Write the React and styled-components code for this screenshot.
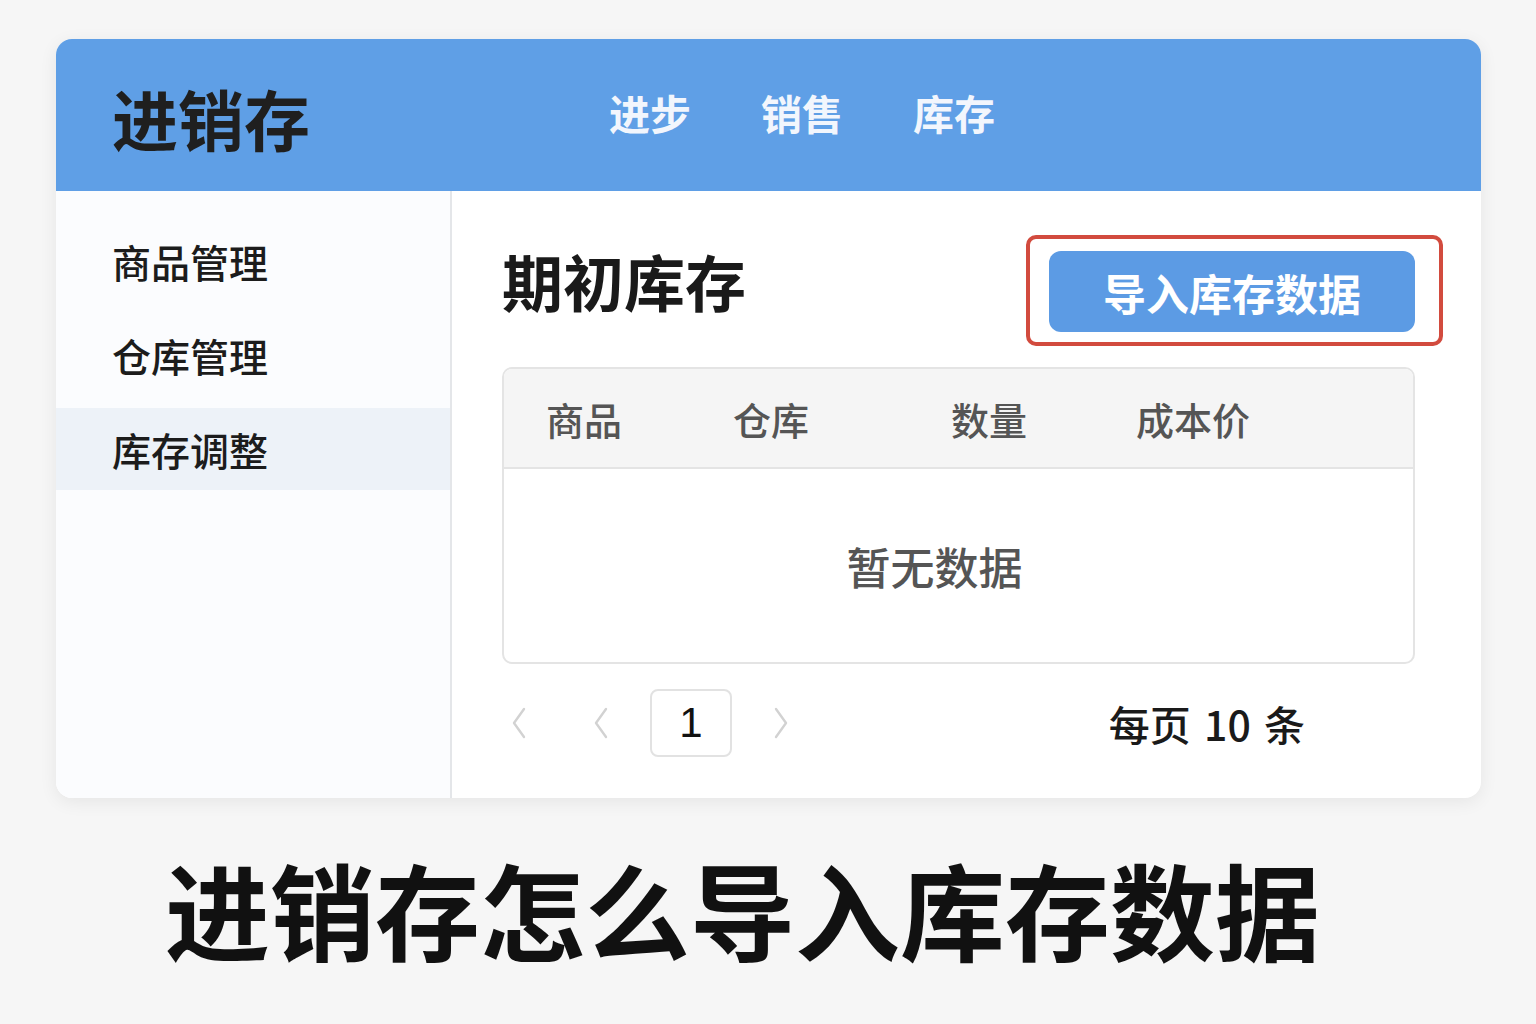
import React from 'react'
import styled, { createGlobalStyle } from 'styled-components'

const GlobalStyle = createGlobalStyle`
    body {
        margin: 0;
        background: #f6f6f6;
        font-family: "Noto Sans CJK SC", "Noto Sans", sans-serif;
    }
`

const Chevron = ({ dir }) => (
    <svg width="22" height="34" viewBox="0 0 22 34" fill="none">
        <path
            d={dir === 'left' ? 'M16 3 L6 17 L16 31' : 'M6 3 L16 17 L6 31'}
            stroke="#d2d2d2"
            strokeWidth="2.4"
            strokeLinecap="round"
            strokeLinejoin="round"
        />
    </svg>
)

const App = () => {
    return (
        <Page>
            <GlobalStyle />
            <Card>
                <Header>
                    <Logo>进销存</Logo>
                    <Nav>
                        <NavItem>进步</NavItem>
                        <NavItem>销售</NavItem>
                        <NavItem>库存</NavItem>
                    </Nav>
                </Header>
                <Body>
                    <Sidebar>
                        <SideItem>商品管理</SideItem>
                        <SideItem>仓库管理</SideItem>
                        <SideItem active>库存调整</SideItem>
                    </Sidebar>
                    <Main>
                        <TitleRow>
                            <Title>期初库存</Title>
                            <Highlight>
                                <ImportButton>导入库存数据</ImportButton>
                            </Highlight>
                        </TitleRow>
                        <Table>
                            <TableHead>
                                <span>商品</span>
                                <span>仓库</span>
                                <span>数量</span>
                                <span>成本价</span>
                            </TableHead>
                            <Empty>暂无数据</Empty>
                        </Table>
                        <Pager>
                            <PagerLeft>
                                <Chevron dir="left" />
                                <Chevron dir="left" />
                                <PageBox>1</PageBox>
                                <Chevron dir="right" />
                            </PagerLeft>
                            <PageSize>每页 10 条</PageSize>
                        </Pager>
                    </Main>
                </Body>
            </Card>
            <Caption>进销存怎么导入库存数据</Caption>
        </Page>
    )
}

const Page = styled.div`
    padding: 39px 55px 0 56px;
    min-height: 985px;
`

const Card = styled.div`
    height: 759px;
    background: #fff;
    border-radius: 16px;
    overflow: hidden;
    box-shadow: 0 4px 18px rgba(0, 0, 0, 0.07);
    display: flex;
    flex-direction: column;
`

const Header = styled.div`
    height: 152px;
    flex-shrink: 0;
    background: #5f9fe6;
    display: flex;
    align-items: center;
    padding-left: 56px;
`

const Logo = styled.div`
    font-size: 66px;
    font-weight: 700;
    color: #1f1f1f;
    line-height: 1;
    margin-top: 4px;
    width: 200px;
    flex-shrink: 0;
    white-space: nowrap;
`

const Nav = styled.div`
    display: flex;
    gap: 70px;
    margin-left: 297px;
    margin-top: -6px;
`

const NavItem = styled.div`
    font-size: 41px;
    font-weight: 700;
    color: #f2f6fd;
    line-height: 1;
    white-space: nowrap;
`

const Body = styled.div`
    flex: 1;
    display: flex;
`

const Sidebar = styled.div`
    width: 394px;
    flex-shrink: 0;
    background: #fbfcfe;
    border-right: 2px solid #e4e6e9;
    padding-top: 29px;
    display: flex;
    flex-direction: column;
    gap: 12px;
`

const SideItem = styled.div`
    height: 82px;
    display: flex;
    align-items: center;
    padding-left: 56px;
    font-size: 39px;
    font-weight: 500;
    color: #1c1c1c;
    background: ${p => (p.active ? '#edf2f8' : 'transparent')};
`

const Main = styled.div`
    flex: 1;
    padding: 44px 66px 0 50px;
    display: flex;
    flex-direction: column;
`

const TitleRow = styled.div`
    display: flex;
    justify-content: space-between;
    align-items: center;
    margin-right: -28px;
    margin-bottom: 21px;
`

const Title = styled.div`
    font-size: 61px;
    font-weight: 700;
    color: #1a1a1a;
    line-height: 1;
    margin-top: -20px;
`

const Highlight = styled.div`
    border: 4px solid #d24b3e;
    border-radius: 10px;
    padding: 12px 24px 10px 19px;
    background: #fff;
`

const ImportButton = styled.button`
    width: 366px;
    height: 81px;
    border: none;
    border-radius: 12px;
    background: #5c9be4;
    color: #fff;
    font-family: inherit;
    font-size: 43px;
    font-weight: 700;
    padding: 0;
    cursor: pointer;
`

const Table = styled.div`
    height: 297px;
    border: 2px solid #e4e4e4;
    border-radius: 10px;
    overflow: hidden;
    display: flex;
    flex-direction: column;
    box-sizing: border-box;
`

const TableHead = styled.div`
    height: 98px;
    flex-shrink: 0;
    background: #f5f5f5;
    border-bottom: 2px solid #e4e4e4;
    display: grid;
    grid-template-columns: 187px 218px 185px 1fr;
    align-items: center;
    padding-left: 42px;
    font-size: 38px;
    font-weight: 500;
    color: #555;
`

const Empty = styled.div`
    flex: 1;
    display: flex;
    align-items: center;
    justify-content: center;
    font-size: 44px;
    font-weight: 500;
    color: #555;
    padding-right: 48px;
`

const Pager = styled.div`
    display: flex;
    justify-content: space-between;
    align-items: center;
    margin-top: 25px;
    padding-left: 6px;
    padding-right: 110px;
`

const PagerLeft = styled.div`
    display: flex;
    align-items: center;

    svg:nth-child(1) {
        margin-right: 60px;
    }
    svg:nth-child(2) {
        margin-right: 38px;
    }
    svg:nth-child(4) {
        margin-left: 38px;
    }
`

const PageBox = styled.div`
    width: 82px;
    height: 68px;
    box-sizing: border-box;
    border: 2px solid #e2e2e2;
    border-radius: 8px;
    display: flex;
    align-items: center;
    justify-content: center;
    font-family: "Liberation Sans", sans-serif;
    font-size: 42px;
    color: #111;
`

const PageSize = styled.div`
    font-size: 41px;
    font-weight: 500;
    color: #1a1a1a;
    word-spacing: 4px;
`

const Caption = styled.div`
    text-align: center;
    font-size: 105px;
    font-weight: 700;
    color: #111;
    line-height: 1;
    margin-top: 57px;
    padding-right: 52px;
`

export default App
